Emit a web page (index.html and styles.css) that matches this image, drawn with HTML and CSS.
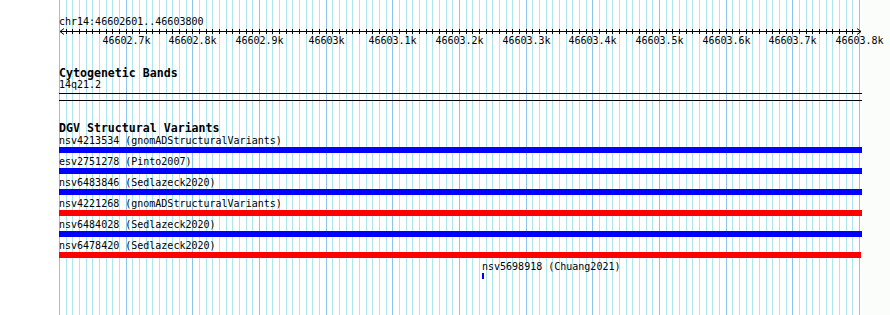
FILE: index.html
```html
<!DOCTYPE html>
<html lang="en">
<head>
    <meta charset="UTF-8">
    <meta name="viewport" content="width=device-width, initial-scale=1.0">
    <title>chr14:46602601..46603800</title>
    <link rel="stylesheet" href="styles.css">
</head>
<body>
    <div class="view">
        <svg class="grid" id="grid" width="803" height="315"></svg>
        <div class="content">
            <div class="locus">chr14:46602601..46603800</div>
            <svg class="ruler" id="ruler" width="803" height="8">
                <line x1="1" y1="4.5" x2="802" y2="4.5"></line>
                <polyline points="5,1.5 1,4.5 5,7.5"></polyline>
                <polyline points="798,1.5 802,4.5 798,7.5"></polyline>
            </svg>
            <div class="scale" id="scale"></div>

            <div class="track cyto">
                <div class="track-label">Cytogenetic Bands</div>
                <div class="band">14q21.2</div>
            </div>

            <div class="track dgv">
                <div class="track-label">DGV Structural Variants</div>
                <div class="feature" style="margin-left:0;width:803px">
                    <div class="feature-label">nsv4213534 (gnomADStructuralVariants)</div>
                    <div class="bar gain"></div>
                </div>
                <div class="feature" style="margin-left:0;width:803px">
                    <div class="feature-label">esv2751278 (Pinto2007)</div>
                    <div class="bar gain"></div>
                </div>
                <div class="feature" style="margin-left:0;width:803px">
                    <div class="feature-label">nsv6483846 (Sedlazeck2020)</div>
                    <div class="bar gain"></div>
                </div>
                <div class="feature" style="margin-left:0;width:803px">
                    <div class="feature-label">nsv4221268 (gnomADStructuralVariants)</div>
                    <div class="bar loss"></div>
                </div>
                <div class="feature" style="margin-left:0;width:803px">
                    <div class="feature-label">nsv6484028 (Sedlazeck2020)</div>
                    <div class="bar gain"></div>
                </div>
                <div class="feature" style="margin-left:0;width:802px">
                    <div class="feature-label">nsv6478420 (Sedlazeck2020)</div>
                    <div class="bar loss"></div>
                </div>
                <div class="feature" style="margin-left:423px;width:2px">
                    <div class="feature-label">nsv5698918 (Chuang2021)</div>
                    <div class="bar gain"></div>
                </div>
            </div>
        </div>
    </div>

    <script>
        var start = 46602600;
        var end = 46603800;
        var pxPerBp = 2 / 3;
        var svgNS = 'http://www.w3.org/2000/svg';

        function xOf(bp) {
            return Math.round((bp - start) * pxPerBp);
        }

        function addLine(svg, x1, y1, x2, y2, cls) {
            var line = document.createElementNS(svgNS, 'line');
            line.setAttribute('x1', x1);
            line.setAttribute('y1', y1);
            line.setAttribute('x2', x2);
            line.setAttribute('y2', y2);
            if (cls) line.setAttribute('class', cls);
            svg.appendChild(line);
        }

        // vertical grid: minor line every 10bp, major every 100bp
        var grid = document.getElementById('grid');
        for (var bp = start; bp <= end; bp += 10) {
            var x = xOf(bp) + 0.5;
            addLine(grid, x, 0, x, 315, bp % 100 === 0 ? 'major' : 'minor');
        }

        // ruler ticks
        var ruler = document.getElementById('ruler');
        for (var t = start + 10; t < end; t += 10) {
            var tx = xOf(t) + 0.5;
            addLine(ruler, tx, 2, tx, 7, 'tick');
        }

        // ruler labels
        var scale = document.getElementById('scale');
        for (var m = start + 100; m <= end; m += 100) {
            var label = document.createElement('span');
            label.innerText = (m / 1000) + 'k';
            label.style.left = (xOf(m) + 0.5) + 'px';
            scale.appendChild(label);
        }
    </script>
</body>
</html>
```

FILE: styles.css
```css
body {
    margin: 0;
    font-family: "DejaVu Sans Mono", monospace;
    font-size: 10px;
    color: #000;
    background: linear-gradient(to right, #fff 862px, #fbfdfb 862px);
}
.view {
    position: relative;
    margin-left: 59px;
    width: 803px;
    height: 315px;
    background-color: #fff;
}
.grid {
    position: absolute;
    top: 0;
    left: 0;
    shape-rendering: crispEdges;
}
.grid .minor {
    stroke: #aee6ee;
    stroke-width: 1;
}
.grid .major {
    stroke: #8cc4ec;
    stroke-width: 1;
}
.content {
    position: relative;
}
.locus {
    padding-top: 16px;
    line-height: 11px;
    white-space: nowrap;
}
.ruler {
    display: block;
    overflow: visible;
}
.ruler line {
    stroke: #000;
    stroke-width: 1;
    shape-rendering: crispEdges;
}
.ruler polyline {
    fill: none;
    stroke: #000;
    stroke-width: 1;
}
.scale {
    position: relative;
    height: 11px;
    line-height: 11px;
}
.scale span {
    position: absolute;
    top: 0;
    transform: translateX(-50%);
    white-space: nowrap;
}
.track-label {
    font-weight: bold;
    font-size: 11.6px;
    line-height: 11px;
    white-space: nowrap;
}
.cyto {
    margin-top: 22px;
    padding-bottom: 3px;
    border-bottom: 1px solid #000;
}
.band {
    line-height: 11px;
}
.dgv {
    margin-top: 6px;
    padding-top: 21px;
    border-top: 1px solid #000;
}
.dgv .track-label {
    line-height: 12px;
}
.feature {
    padding: 1px 0 2px;
}
.feature-label {
    line-height: 11px;
    white-space: nowrap;
}
.bar {
    margin-top: 1px;
    height: 6px;
}
.gain {
    background-color: #0000ff;
}
.loss {
    background-color: #ff0000;
}
```
